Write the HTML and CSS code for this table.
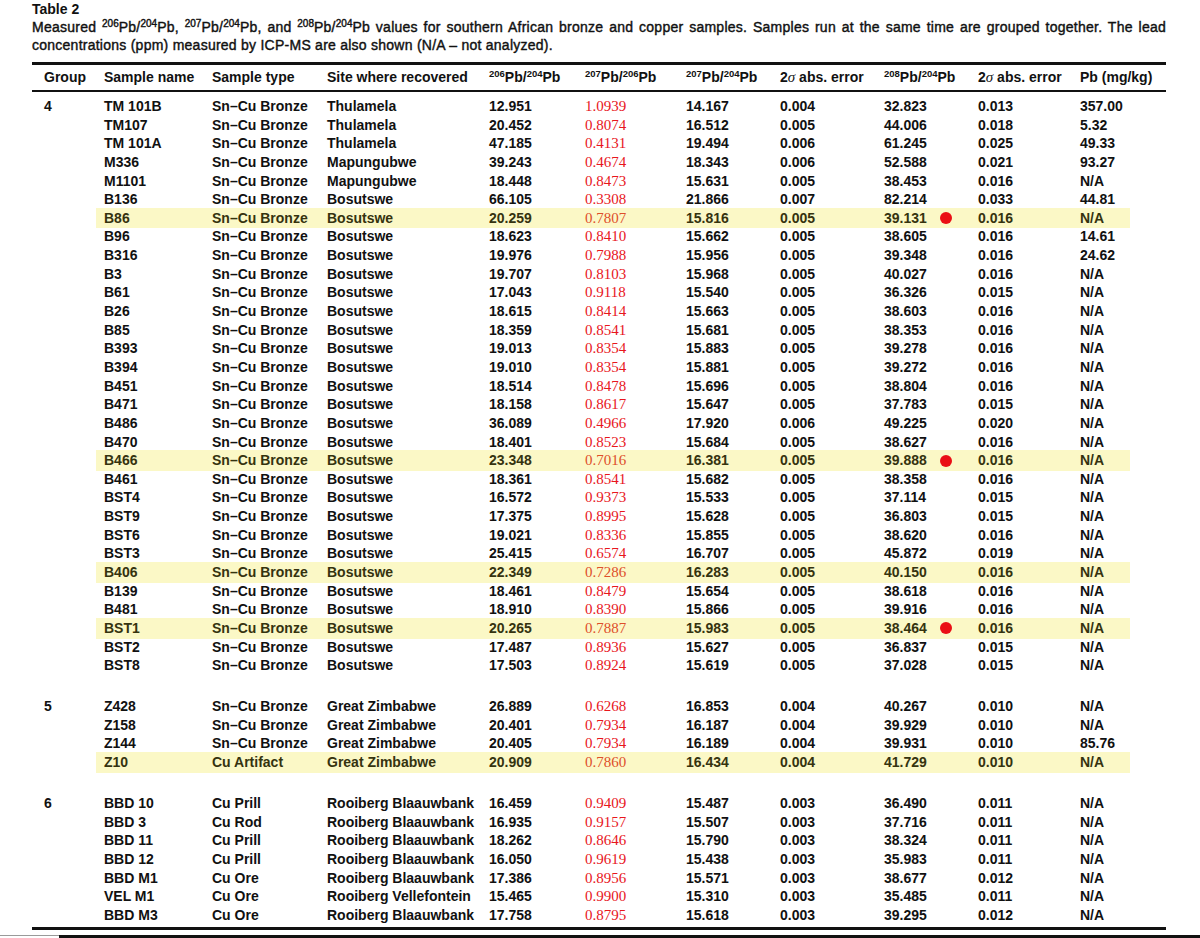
FILE: index.html
```html
<!DOCTYPE html>
<html lang="en">
<head>
<meta charset="utf-8">
<title>Table 2</title>
<link rel="stylesheet" href="styles.css">
</head>
<body>
<div class="page">
  <div class="caption">
    <div class="caption-title">Table 2</div>
    <div class="caption-line">Measured <sup>206</sup>Pb/<sup>204</sup>Pb, <sup>207</sup>Pb/<sup>204</sup>Pb, and <sup>208</sup>Pb/<sup>204</sup>Pb values for southern African bronze and copper samples. Samples run at the same time are grouped together. The lead</div>
    <div class="caption-text">concentrations (ppm) measured by ICP-MS are also shown (N/A – not analyzed).</div>
  </div>
  <div class="table">
    <div class="row head">
      <span>Group</span><span>Sample name</span><span>Sample type</span><span>Site where recovered</span>
      <span><sup>206</sup>Pb/<sup>204</sup>Pb</span><span><sup>207</sup>Pb/<sup>206</sup>Pb</span><span><sup>207</sup>Pb/<sup>204</sup>Pb</span>
      <span>2<i>σ</i> abs. error</span><span><sup>208</sup>Pb/<sup>204</sup>Pb</span><span>2<i>σ</i> abs. error</span><span>Pb (mg/kg)</span>
    </div>
    <div class="body">
      <div class="row"><span>4</span><span>TM 101B</span><span>Sn–Cu Bronze</span><span>Thulamela</span><span>12.951</span><span class="r">1.0939</span><span>14.167</span><span>0.004</span><span>32.823</span><span>0.013</span><span>357.00</span></div>
      <div class="row"><span></span><span>TM107</span><span>Sn–Cu Bronze</span><span>Thulamela</span><span>20.452</span><span class="r">0.8074</span><span>16.512</span><span>0.005</span><span>44.006</span><span>0.018</span><span>5.32</span></div>
      <div class="row"><span></span><span>TM 101A</span><span>Sn–Cu Bronze</span><span>Thulamela</span><span>47.185</span><span class="r">0.4131</span><span>19.494</span><span>0.006</span><span>61.245</span><span>0.025</span><span>49.33</span></div>
      <div class="row"><span></span><span>M336</span><span>Sn–Cu Bronze</span><span>Mapungubwe</span><span>39.243</span><span class="r">0.4674</span><span>18.343</span><span>0.006</span><span>52.588</span><span>0.021</span><span>93.27</span></div>
      <div class="row"><span></span><span>M1101</span><span>Sn–Cu Bronze</span><span>Mapungubwe</span><span>18.448</span><span class="r">0.8473</span><span>15.631</span><span>0.005</span><span>38.453</span><span>0.016</span><span>N/A</span></div>
      <div class="row"><span></span><span>B136</span><span>Sn–Cu Bronze</span><span>Bosutswe</span><span>66.105</span><span class="r">0.3308</span><span>21.866</span><span>0.007</span><span>82.214</span><span>0.033</span><span>44.81</span></div>
      <div class="row hl"><span></span><span>B86</span><span>Sn–Cu Bronze</span><span>Bosutswe</span><span>20.259</span><span class="r">0.7807</span><span>15.816</span><span>0.005</span><span class="mark">39.131</span><span>0.016</span><span>N/A</span></div>
      <div class="row"><span></span><span>B96</span><span>Sn–Cu Bronze</span><span>Bosutswe</span><span>18.623</span><span class="r">0.8410</span><span>15.662</span><span>0.005</span><span>38.605</span><span>0.016</span><span>14.61</span></div>
      <div class="row"><span></span><span>B316</span><span>Sn–Cu Bronze</span><span>Bosutswe</span><span>19.976</span><span class="r">0.7988</span><span>15.956</span><span>0.005</span><span>39.348</span><span>0.016</span><span>24.62</span></div>
      <div class="row"><span></span><span>B3</span><span>Sn–Cu Bronze</span><span>Bosutswe</span><span>19.707</span><span class="r">0.8103</span><span>15.968</span><span>0.005</span><span>40.027</span><span>0.016</span><span>N/A</span></div>
      <div class="row"><span></span><span>B61</span><span>Sn–Cu Bronze</span><span>Bosutswe</span><span>17.043</span><span class="r">0.9118</span><span>15.540</span><span>0.005</span><span>36.326</span><span>0.015</span><span>N/A</span></div>
      <div class="row"><span></span><span>B26</span><span>Sn–Cu Bronze</span><span>Bosutswe</span><span>18.615</span><span class="r">0.8414</span><span>15.663</span><span>0.005</span><span>38.603</span><span>0.016</span><span>N/A</span></div>
      <div class="row"><span></span><span>B85</span><span>Sn–Cu Bronze</span><span>Bosutswe</span><span>18.359</span><span class="r">0.8541</span><span>15.681</span><span>0.005</span><span>38.353</span><span>0.016</span><span>N/A</span></div>
      <div class="row"><span></span><span>B393</span><span>Sn–Cu Bronze</span><span>Bosutswe</span><span>19.013</span><span class="r">0.8354</span><span>15.883</span><span>0.005</span><span>39.278</span><span>0.016</span><span>N/A</span></div>
      <div class="row"><span></span><span>B394</span><span>Sn–Cu Bronze</span><span>Bosutswe</span><span>19.010</span><span class="r">0.8354</span><span>15.881</span><span>0.005</span><span>39.272</span><span>0.016</span><span>N/A</span></div>
      <div class="row"><span></span><span>B451</span><span>Sn–Cu Bronze</span><span>Bosutswe</span><span>18.514</span><span class="r">0.8478</span><span>15.696</span><span>0.005</span><span>38.804</span><span>0.016</span><span>N/A</span></div>
      <div class="row"><span></span><span>B471</span><span>Sn–Cu Bronze</span><span>Bosutswe</span><span>18.158</span><span class="r">0.8617</span><span>15.647</span><span>0.005</span><span>37.783</span><span>0.015</span><span>N/A</span></div>
      <div class="row"><span></span><span>B486</span><span>Sn–Cu Bronze</span><span>Bosutswe</span><span>36.089</span><span class="r">0.4966</span><span>17.920</span><span>0.006</span><span>49.225</span><span>0.020</span><span>N/A</span></div>
      <div class="row"><span></span><span>B470</span><span>Sn–Cu Bronze</span><span>Bosutswe</span><span>18.401</span><span class="r">0.8523</span><span>15.684</span><span>0.005</span><span>38.627</span><span>0.016</span><span>N/A</span></div>
      <div class="row hl"><span></span><span>B466</span><span>Sn–Cu Bronze</span><span>Bosutswe</span><span>23.348</span><span class="r">0.7016</span><span>16.381</span><span>0.005</span><span class="mark">39.888</span><span>0.016</span><span>N/A</span></div>
      <div class="row"><span></span><span>B461</span><span>Sn–Cu Bronze</span><span>Bosutswe</span><span>18.361</span><span class="r">0.8541</span><span>15.682</span><span>0.005</span><span>38.358</span><span>0.016</span><span>N/A</span></div>
      <div class="row"><span></span><span>BST4</span><span>Sn–Cu Bronze</span><span>Bosutswe</span><span>16.572</span><span class="r">0.9373</span><span>15.533</span><span>0.005</span><span>37.114</span><span>0.015</span><span>N/A</span></div>
      <div class="row"><span></span><span>BST9</span><span>Sn–Cu Bronze</span><span>Bosutswe</span><span>17.375</span><span class="r">0.8995</span><span>15.628</span><span>0.005</span><span>36.803</span><span>0.015</span><span>N/A</span></div>
      <div class="row"><span></span><span>BST6</span><span>Sn–Cu Bronze</span><span>Bosutswe</span><span>19.021</span><span class="r">0.8336</span><span>15.855</span><span>0.005</span><span>38.620</span><span>0.016</span><span>N/A</span></div>
      <div class="row"><span></span><span>BST3</span><span>Sn–Cu Bronze</span><span>Bosutswe</span><span>25.415</span><span class="r">0.6574</span><span>16.707</span><span>0.005</span><span>45.872</span><span>0.019</span><span>N/A</span></div>
      <div class="row hl"><span></span><span>B406</span><span>Sn–Cu Bronze</span><span>Bosutswe</span><span>22.349</span><span class="r">0.7286</span><span>16.283</span><span>0.005</span><span>40.150</span><span>0.016</span><span>N/A</span></div>
      <div class="row"><span></span><span>B139</span><span>Sn–Cu Bronze</span><span>Bosutswe</span><span>18.461</span><span class="r">0.8479</span><span>15.654</span><span>0.005</span><span>38.618</span><span>0.016</span><span>N/A</span></div>
      <div class="row"><span></span><span>B481</span><span>Sn–Cu Bronze</span><span>Bosutswe</span><span>18.910</span><span class="r">0.8390</span><span>15.866</span><span>0.005</span><span>39.916</span><span>0.016</span><span>N/A</span></div>
      <div class="row hl"><span></span><span>BST1</span><span>Sn–Cu Bronze</span><span>Bosutswe</span><span>20.265</span><span class="r">0.7887</span><span>15.983</span><span>0.005</span><span class="mark">38.464</span><span>0.016</span><span>N/A</span></div>
      <div class="row"><span></span><span>BST2</span><span>Sn–Cu Bronze</span><span>Bosutswe</span><span>17.487</span><span class="r">0.8936</span><span>15.627</span><span>0.005</span><span>36.837</span><span>0.015</span><span>N/A</span></div>
      <div class="row"><span></span><span>BST8</span><span>Sn–Cu Bronze</span><span>Bosutswe</span><span>17.503</span><span class="r">0.8924</span><span>15.619</span><span>0.005</span><span>37.028</span><span>0.015</span><span>N/A</span></div>
      <div class="gap"></div>
      <div class="row"><span>5</span><span>Z428</span><span>Sn–Cu Bronze</span><span>Great Zimbabwe</span><span>26.889</span><span class="r">0.6268</span><span>16.853</span><span>0.004</span><span>40.267</span><span>0.010</span><span>N/A</span></div>
      <div class="row"><span></span><span>Z158</span><span>Sn–Cu Bronze</span><span>Great Zimbabwe</span><span>20.401</span><span class="r">0.7934</span><span>16.187</span><span>0.004</span><span>39.929</span><span>0.010</span><span>N/A</span></div>
      <div class="row"><span></span><span>Z144</span><span>Sn–Cu Bronze</span><span>Great Zimbabwe</span><span>20.405</span><span class="r">0.7934</span><span>16.189</span><span>0.004</span><span>39.931</span><span>0.010</span><span>85.76</span></div>
      <div class="row hl"><span></span><span>Z10</span><span>Cu Artifact</span><span>Great Zimbabwe</span><span>20.909</span><span class="r">0.7860</span><span>16.434</span><span>0.004</span><span>41.729</span><span>0.010</span><span>N/A</span></div>
      <div class="gap"></div>
      <div class="row"><span>6</span><span>BBD 10</span><span>Cu Prill</span><span>Rooiberg Blaauwbank</span><span>16.459</span><span class="r">0.9409</span><span>15.487</span><span>0.003</span><span>36.490</span><span>0.011</span><span>N/A</span></div>
      <div class="row"><span></span><span>BBD 3</span><span>Cu Rod</span><span>Rooiberg Blaauwbank</span><span>16.935</span><span class="r">0.9157</span><span>15.507</span><span>0.003</span><span>37.716</span><span>0.011</span><span>N/A</span></div>
      <div class="row"><span></span><span>BBD 11</span><span>Cu Prill</span><span>Rooiberg Blaauwbank</span><span>18.262</span><span class="r">0.8646</span><span>15.790</span><span>0.003</span><span>38.324</span><span>0.011</span><span>N/A</span></div>
      <div class="row"><span></span><span>BBD 12</span><span>Cu Prill</span><span>Rooiberg Blaauwbank</span><span>16.050</span><span class="r">0.9619</span><span>15.438</span><span>0.003</span><span>35.983</span><span>0.011</span><span>N/A</span></div>
      <div class="row"><span></span><span>BBD M1</span><span>Cu Ore</span><span>Rooiberg Blaauwbank</span><span>17.386</span><span class="r">0.8956</span><span>15.571</span><span>0.003</span><span>38.677</span><span>0.012</span><span>N/A</span></div>
      <div class="row"><span></span><span>VEL M1</span><span>Cu Ore</span><span>Rooiberg Vellefontein</span><span>15.465</span><span class="r">0.9900</span><span>15.310</span><span>0.003</span><span>35.485</span><span>0.011</span><span>N/A</span></div>
      <div class="row"><span></span><span>BBD M3</span><span>Cu Ore</span><span>Rooiberg Blaauwbank</span><span>17.758</span><span class="r">0.8795</span><span>15.618</span><span>0.003</span><span>39.295</span><span>0.012</span><span>N/A</span></div>
    </div>
  </div>
</div>
<div class="edge"><span class="edge-left"></span><span class="edge-right"></span></div>
</body>
</html>
```

FILE: styles.css
```css
html, body {
  margin: 0;
  padding: 0;
  background: #ffffff;
  overflow: hidden;
}

body {
  font-family: "Liberation Sans", Arial, sans-serif;
  color: #111111;
}

.page {
  padding: 0 34px 0 32px;
}

.caption {
  font-size: 14px;
  line-height: 18px;
}

.caption-title {
  font-weight: 700;
}

.caption-line,
.caption-text {
  -webkit-text-stroke: 0.4px #111111;
  letter-spacing: 0.25px;
}

.caption-line {
  text-align: justify;
  text-align-last: justify;
  white-space: nowrap;
}

.caption sup,
.head sup {
  font-size: 10px;
  line-height: 0;
  vertical-align: 5px;
  letter-spacing: 0;
}

.table {
  margin-top: 8px;
  border-top: 3px solid #111111;
  border-bottom: 3px solid #111111;
  font-size: 14px;
  font-weight: 700;
}

.row {
  display: grid;
  grid-template-columns: 72px 108px 115px 162px 96px 101px 94px 104px 94px 102px 86px;
  height: 18.65px;
  line-height: 18.65px;
  white-space: nowrap;
  position: relative;
  isolation: isolate;
}

.row > span:first-child {
  padding-left: 12px;
}

.head {
  height: 25px;
  line-height: 25px;
  border-bottom: 2px solid #111111;
}

.head sup {
  font-size: 9.5px;
}

.head i {
  font-family: "Liberation Serif", serif;
  font-weight: 400;
  font-size: 15px;
}

.body {
  padding: 5px 0 2px;
}

.gap {
  height: 22.3px;
}

.r {
  font-family: "Liberation Serif", "Times New Roman", serif;
  font-weight: 400;
  font-size: 15px;
  color: #e8161c;
}

.hl {
  color: #35330f;
}

.hl::before {
  content: "";
  position: absolute;
  left: 64px;
  right: 36px;
  top: -1px;
  bottom: -1px;
  background: #fbf8c6;
  z-index: -1;
}

.hl .r {
  color: #de4f2a;
}

.mark {
  position: relative;
}

.mark::after {
  content: "";
  position: absolute;
  left: 56px;
  top: 50%;
  width: 12px;
  height: 12px;
  margin-top: -6px;
  border-radius: 50%;
  background: #ea0f15;
}

.edge {
  display: flex;
  height: 3px;
  margin-top: 5px;
}

.edge-left {
  width: 59px;
  border-top: 1px solid #9a9a9a;
}

.edge-right {
  flex: 1;
  background: #111111;
}
```
